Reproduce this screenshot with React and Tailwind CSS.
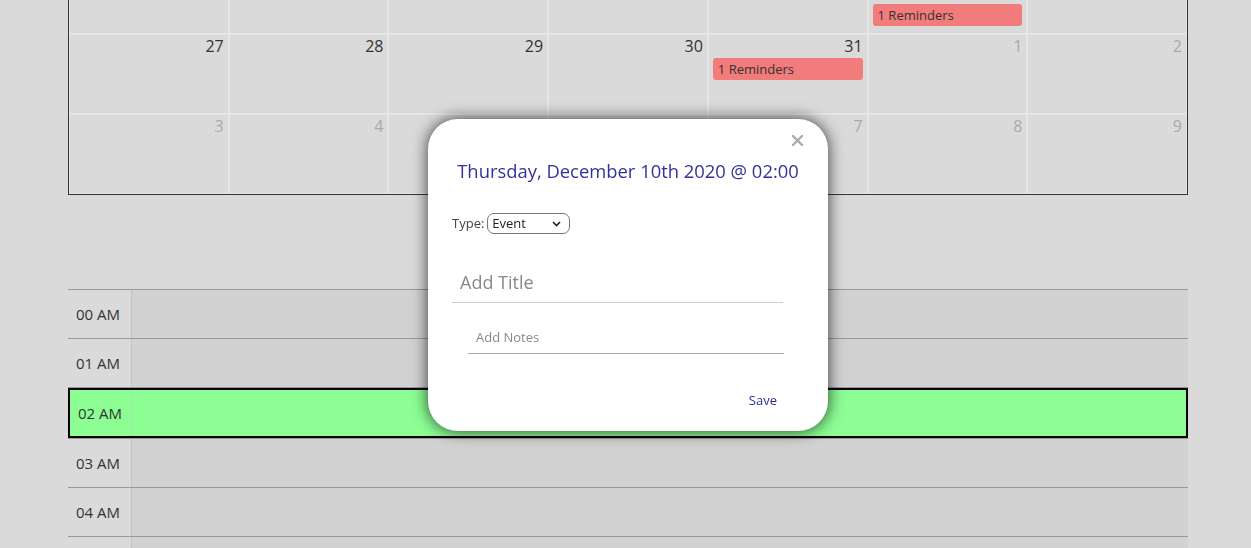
import React from 'react';

const weeks = [
  [
    { day: 20 }, { day: 21 }, { day: 22 }, { day: 23 }, { day: 24 },
    { day: 25, chips: ['event', 'reminder'] }, { day: 26 },
  ],
  [
    { day: 27 }, { day: 28 }, { day: 29 }, { day: 30 },
    { day: 31, chips: ['reminder'] },
    { day: 1, other: true }, { day: 2, other: true },
  ],
  [3, 4, 5, 6, 7, 8, 9].map((d) => ({ day: d, other: true })),
];

const hours = ['00 AM', '01 AM', '02 AM', '03 AM', '04 AM', '05 AM'];

const Chip = ({ kind }) =>
  kind === 'event' ? (
    <div className="mx-1 mb-1 h-[22px] rounded-[3px] bg-[#90c8f2] pl-[5px] text-[13px] leading-[22px] text-[#333]">
      1 Events
    </div>
  ) : (
    <div className="mx-1 mb-1 h-[22px] rounded-[3px] bg-[#f27b7b] pl-[5px] text-[13px] leading-[22px] text-[#333]">
      1 Reminders
    </div>
  );

const Calendar = () => (
  <div className="ml-[68px] mt-[-47px] w-[1120px] border border-[#333]">
    {weeks.map((week, i) => (
      <div key={i} className="grid h-[80px] grid-cols-7">
        {week.map((cell) => (
          <div key={cell.day} className="border border-[#e6e6e6]">
            <div
              className={
                'pr-[4px] text-right text-[16px] leading-[23px] ' +
                (cell.other ? 'text-[#ababab]' : 'text-[#333]')
              }
            >
              {cell.day}
            </div>
            {cell.chips && cell.chips.map((c) => <Chip key={c} kind={c} />)}
          </div>
        ))}
      </div>
    ))}
  </div>
);

const DayView = () => (
  <div className="ml-[68px] mt-[94px] w-[1120px]">
    {hours.map((h) =>
      h === '02 AM' ? (
        <div key={h} className="border-t border-[#999]">
          <div className="flex h-[50px] border-2 border-black bg-[#8cfe94]">
            <div className="flex w-[61px] items-center pl-2 text-[15px] text-[#333]">{h}</div>
            <div className="flex-1 border-l border-[#a4e6a8]" />
          </div>
        </div>
      ) : (
        <div key={h} className="flex h-[49px] border-t border-[#999]">
          <div className="flex w-[63px] items-center pl-2 text-[15px] text-[#333]">{h}</div>
          <div className="flex-1 border-l border-[#c4c4c4] bg-[#d2d2d2]" />
        </div>
      )
    )}
  </div>
);

const Modal = () => (
  <div className="fixed left-[428px] top-[119px] flex h-[312px] w-[400px] flex-col rounded-[30px] bg-white px-6 pt-[38px] shadow-[0_0_16px_rgba(0,0,0,0.75)]">
    <button className="absolute right-[25px] top-[16px]">
      <svg width="11" height="11" viewBox="0 0 11 11">
        <path d="M1 1L10 10M10 1L1 10" stroke="#aaa" strokeWidth="2.4" strokeLinecap="round" />
      </svg>
    </button>
    <h2 className="text-center text-[18.4px] leading-[27px] text-[#32329a]">
      Thursday, December 10th 2020 @ 02:00
    </h2>
    <div className="mt-[29px] flex items-center text-[13px] text-[#444]">
      <span className="mr-[3px]">Type:</span>
      <div className="relative">
        <select className="h-[21px] w-[83px] appearance-none rounded-[7px] border border-[#767676] bg-white pl-1 text-[13px] leading-[19px] text-[#222] outline-none">
          <option>Event</option>
          <option>Reminder</option>
        </select>
        <svg
          className="pointer-events-none absolute right-[9px] top-[8px]"
          width="9"
          height="6"
          viewBox="0 0 9 6"
        >
          <path d="M1 1L4.5 4.5L8 1" fill="none" stroke="#222" strokeWidth="1.6" />
        </svg>
      </div>
    </div>
    <input
      placeholder="Add Title"
      className="mt-[28px] h-[41px] w-[331px] border-b border-[#cfcfcf] pl-2 text-[18px] text-[#333] outline-none placeholder:text-[#888]"
    />
    <input
      placeholder="Add Notes"
      className="ml-4 mt-[17px] h-[34px] w-[316px] border-b border-[#aaa] pl-2 text-[13px] text-[#333] outline-none placeholder:text-[#888]"
    />
    <div className="mt-[36px] flex justify-end pr-[27px]">
      <button className="text-[13px] font-medium leading-[20px] text-[#2f2f99]">Save</button>
    </div>
  </div>
);

export default function App() {
  return (
    <div
      className="h-[548px] overflow-hidden bg-[#dadada]"
      style={{ fontFamily: '"Open Sans", sans-serif' }}
    >
      <Calendar />
      <DayView />
      <Modal />
    </div>
  );
}
